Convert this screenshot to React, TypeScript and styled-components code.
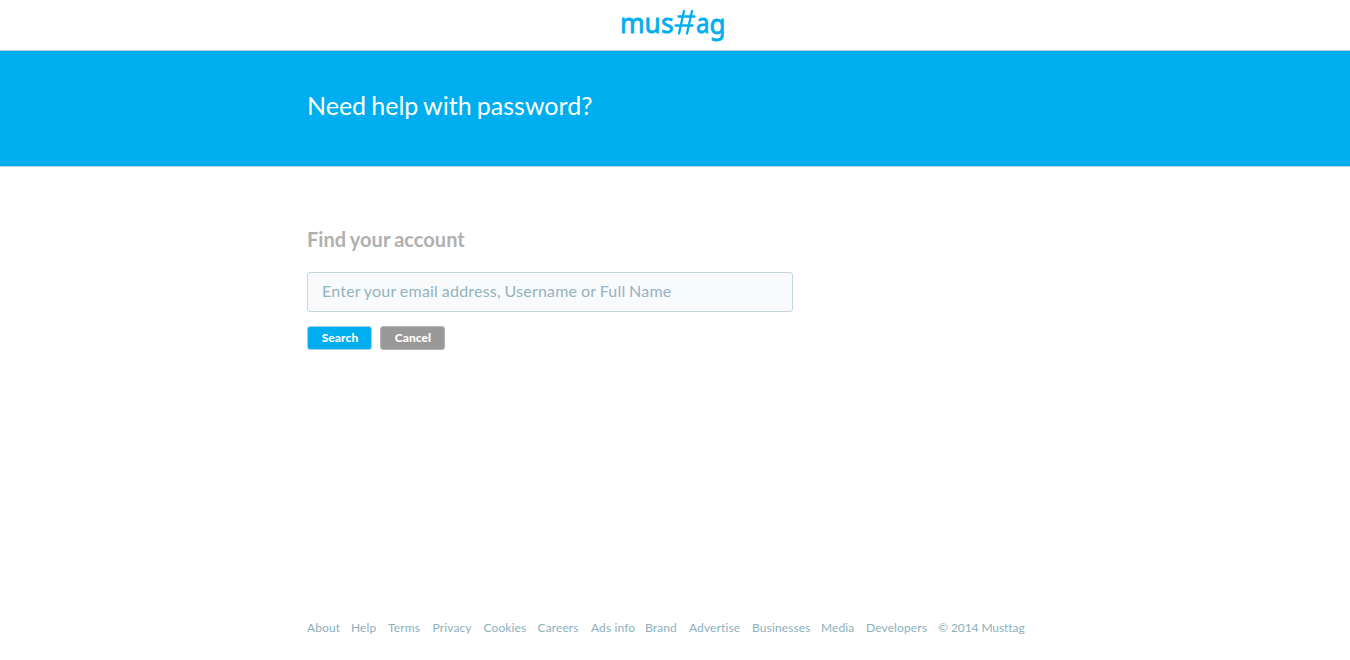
import React from "react";
import styled, { createGlobalStyle } from "styled-components";

const Global = createGlobalStyle`
  *, *::before, *::after { box-sizing: border-box; }
  html, body { margin: 0; background: #fff; }
  body { font-family: Lato, "Liberation Sans", sans-serif; font-variant-ligatures: none; }
`;

const Page = styled.div`
  display: flex;
  flex-direction: column;
  height: 660px;
  overflow: hidden;
`;

const TopBar = styled.header`
  display: flex;
  justify-content: center;
  height: 51px;
  border-bottom: 1px solid #b9cdd6;
`;

const Logo = styled.svg`
  display: block;
  width: 130px;
  height: 50px;
  color: #00aef0;
`;

const Banner = styled.section`
  height: 116px;
  background: #00aef0;
  border-bottom: 1px solid #b9d3de;
`;

const Container = styled.div`
  width: 736px;
  margin: 0 auto;
`;

const Title = styled.h1`
  margin: 0;
  padding-top: 39px;
  font-size: 25px;
  line-height: 30px;
  font-weight: 400;
  word-spacing: -1.2px;
  color: #fff;
`;

const Main = styled.main`
  flex: 1;
  padding-top: 60px;
`;

const Heading = styled.h2`
  margin: 0;
  font-size: 20px;
  line-height: 24px;
  font-weight: 700;
  letter-spacing: 0.03px;
  word-spacing: -0.7px;
  color: #b0b0b0;
`;

const Field = styled.input`
  display: block;
  width: 486px;
  height: 40px;
  margin: 21px 0 14px;
  padding: 0 14px 3px;
  border: 1px solid #c3d7df;
  border-radius: 3px;
  background: #f9fafc;
  font-family: inherit;
  font-size: 16px;
  letter-spacing: 0.21px;
  word-spacing: -0.6px;
  outline: none;
  &::placeholder { color: #92b3c1; opacity: 1; }
`;

const Actions = styled.div`
  display: flex;
  gap: 8px;
`;

const Button = styled.button<{ $muted?: boolean }>`
  width: 65px;
  height: 24px;
  padding: 0 0 0 1px;
  border: 1px solid ${(p) => (p.$muted ? "#b4b4b4" : "#a5d3e5")};
  border-radius: 3px;
  background: ${(p) => (p.$muted ? "#999" : "#00aef0")};
  color: #fff;
  font: 900 12px/20px Lato, sans-serif;
  letter-spacing: 0.08px;
`;

const Footer = styled.footer`
  height: 40px;
`;

const Links = styled.nav`
  display: grid;
  grid-template-columns: 44px 37px 44.5px 51px 54px 53.5px 54px 44px 63px 69px 45px 72px auto;
  font-size: 12px;
  line-height: 16px;
  letter-spacing: 0.12px;
  color: #8cb0bd;
  white-space: nowrap;
`;

const Copyright = styled.span`
  letter-spacing: -0.08px;
`;

const links = ["About", "Help", "Terms", "Privacy", "Cookies", "Careers", "Ads info", "Brand", "Advertise", "Businesses", "Media", "Developers"];

export default function App() {
  return (
    <Page>
      <Global />
      <TopBar>
        <Logo viewBox="0 0 130 50" fill="currentColor" stroke="currentColor" strokeLinejoin="round" strokeWidth="0.8" fontFamily='"Noto Sans", sans-serif' fontSize="28" fontWeight="400">
          <text x="10" y="33" textLength="53.5" lengthAdjust="spacingAndGlyphs">mus</text>
          <path d="M74 11 69 33.5M82 11 77 33.5M68.5 16.5H84.5M65.5 25.5H82.5" fill="none" strokeWidth="2.3" strokeLinecap="round" />
          <text x="86" y="33" textLength="13.5" lengthAdjust="spacingAndGlyphs">a</text>
          <text x="99.5" y="33.5" textLength="16" lengthAdjust="spacingAndGlyphs">g</text>
        </Logo>
      </TopBar>
      <Banner>
        <Container><Title>Need help with password?</Title></Container>
      </Banner>
      <Main>
        <Container>
          <Heading>Find your account</Heading>
          <Field placeholder="Enter your email address, Username or Full Name" />
          <Actions>
            <Button>Search</Button>
            <Button $muted>Cancel</Button>
          </Actions>
        </Container>
      </Main>
      <Footer>
        <Container>
          <Links>
            {links.map((l) => <span key={l}>{l}</span>)}
            <Copyright>© 2014 Musttag</Copyright>
          </Links>
        </Container>
      </Footer>
    </Page>
  );
}
